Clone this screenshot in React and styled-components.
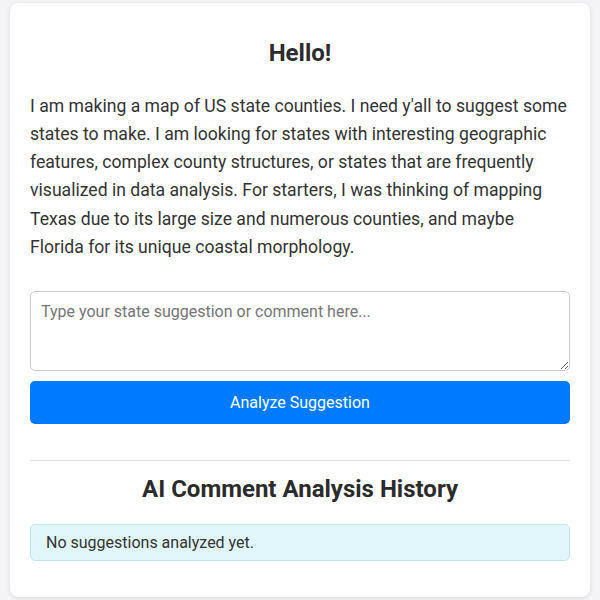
import React from "react";
import styled, { createGlobalStyle } from "styled-components";

const Global = createGlobalStyle`
  html, body { margin: 0; padding: 0; background: #f4f4f7; }
  body { font-family: Roboto, "Liberation Sans", sans-serif; color: #333; }
  * { box-sizing: border-box; }
`;

const Page = styled.div`
  padding: 3px 10px 3px 10px;
`;

const Card = styled.div`
  background: #fff;
  border-radius: 8px;
  box-shadow: 0 1px 4px rgba(0, 0, 0, 0.12);
  padding: 20px;
  display: flex;
  flex-direction: column;
`;

const Title = styled.h1`
  font-size: 24px;
  font-weight: 700;
  line-height: normal;
  text-align: center;
  margin: 16px 0 25px;
  color: #2b2b2b;
`;

const Intro = styled.p`
  font-size: 17.6px;
  line-height: 1.6;
  margin: 0 0 30px;
  color: #333;
`;

const Input = styled.textarea`
  width: 100%;
  height: 80px;
  border: 1px solid #ccc;
  border-radius: 5px;
  padding: 10px;
  font-family: Roboto, "Liberation Sans", sans-serif;
  font-size: 16px;
  color: #333;
  resize: vertical;
  display: block;
  &::placeholder { color: #757575; }
`;

const Button = styled.button`
  margin-top: 10px;
  height: 43px;
  width: 100%;
  border: none;
  border-radius: 5px;
  background: #007bff;
  color: #fff;
  font-family: Roboto, "Liberation Sans", sans-serif;
  font-size: 16px;
  cursor: pointer;
`;

const Divider = styled.hr`
  border: none;
  border-top: 1px solid #ddd;
  margin: 36px 0 14px;
`;

const Subtitle = styled.h2`
  font-size: 24px;
  font-weight: 700;
  line-height: normal;
  text-align: center;
  margin: 0 0 21px;
  color: #2b2b2b;
`;

const Alert = styled.div`
  background: #e0f6fa;
  border: 1px solid #bfe6ee;
  border-radius: 5px;
  padding: 8px 15px;
  font-size: 16px;
  line-height: normal;
  color: #333;
  margin-bottom: 16px;
`;

export default function App() {
  return (
    <>
      <Global />
      <Page>
        <Card>
          <Title>Hello!</Title>
          <Intro>
            I am making a map of US state counties. I need y'all to suggest some
            states to make. I am looking for states with interesting geographic
            features, complex county structures, or states that are frequently
            visualized in data analysis. For starters, I was thinking of mapping
            Texas due to its large size and numerous counties, and maybe Florida
            for its unique coastal morphology.
          </Intro>
          <Input placeholder="Type your state suggestion or comment here..." />
          <Button>Analyze Suggestion</Button>
          <Divider />
          <Subtitle>AI Comment Analysis History</Subtitle>
          <Alert>No suggestions analyzed yet.</Alert>
        </Card>
      </Page>
    </>
  );
}
